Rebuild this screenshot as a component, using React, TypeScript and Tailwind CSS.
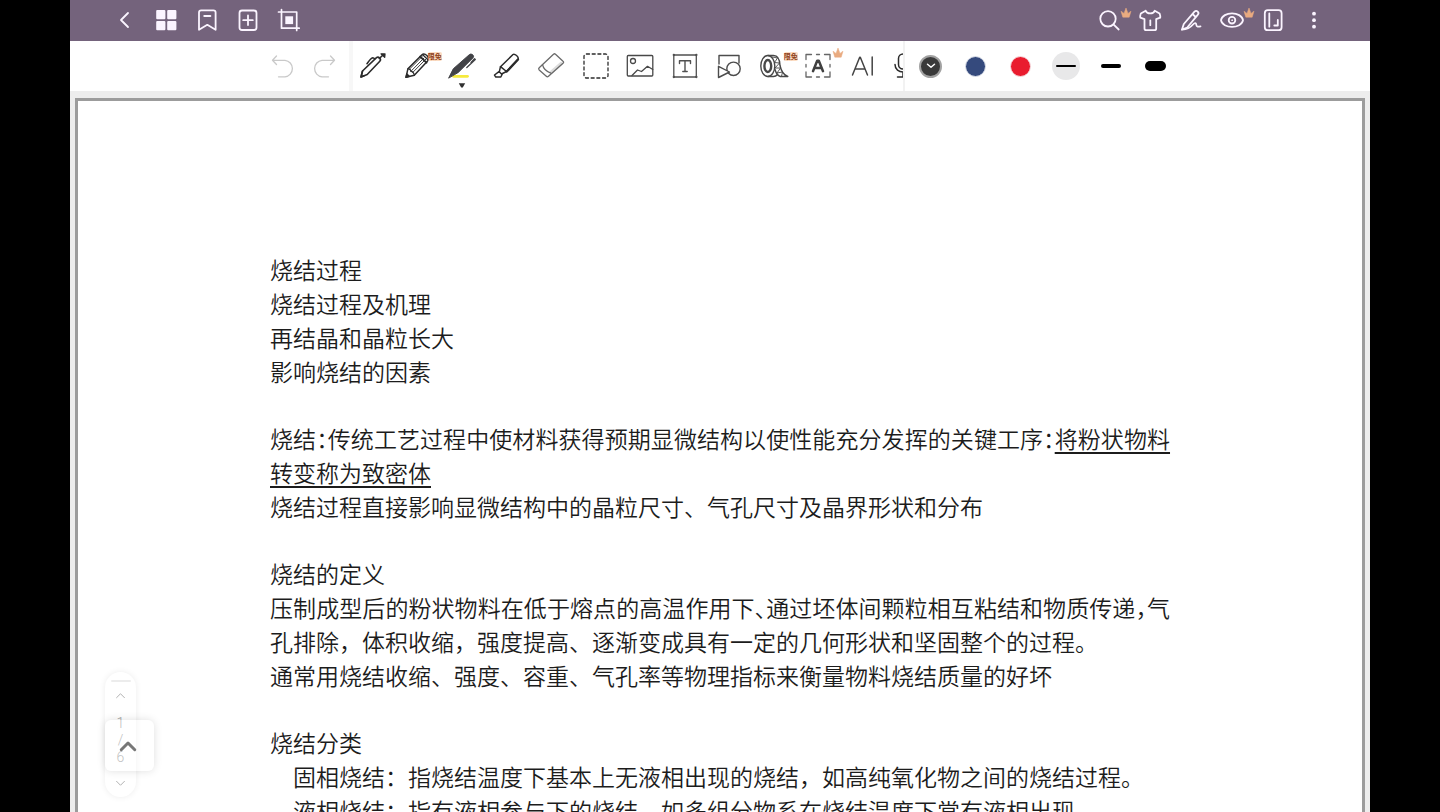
import type { ReactNode } from 'react';

const line = {
  fill: 'none',
  stroke: 'currentColor',
  strokeLinecap: 'round',
  strokeLinejoin: 'round',
} as const;

function Icon({ children, width = 1.5 }: { children: ReactNode; width?: number }) {
  return (
    <svg viewBox="0 0 30 30" className="size-[30px] shrink-0" {...line} strokeWidth={width} aria-hidden="true">
      {children}
    </svg>
  );
}

function Crown({ className }: { className: string }) {
  return (
    <svg viewBox="0 0 12 11" className={className} aria-hidden="true">
      <path
        d="M2.800 10.200 1 4.200l3 2.200L6 1l2 5.400 3-2.200-1.800 6z"
        fill="#e9ab80"
        stroke="#e9ab80"
        strokeWidth="0.5"
        strokeLinejoin="round"
      />
    </svg>
  );
}

function FreeBadge() {
  return (
    <span className="absolute top-px left-[32px] rounded-xs bg-[#fcdcc2] text-[7px] leading-[9px] font-bold whitespace-nowrap text-[#8f431c]">
      限免
    </span>
  );
}

type Item = { label: string; icon: ReactNode; extra?: ReactNode };

const headerLeft: Item[] = [
  { label: '返回', icon: <path d="M18 8 11 15l7 7" strokeWidth="1.800" /> },
  {
    label: '缩略图',
    icon: (
      <g fill="currentColor" stroke="none">
        <rect x="5.200" y="5" width="9.200" height="9.200" rx="1" />
        <rect x="16.200" y="5" width="9.200" height="9.200" rx="1" />
        <rect x="5.200" y="16" width="9.200" height="9.200" rx="1" />
        <rect x="16.200" y="16" width="9.200" height="9.200" rx="1" />
      </g>
    ),
  },
  {
    label: '书签',
    icon: (
      <>
        <path d="M7 7.500a2.200 2.200 0 0 1 2.200-2.200h12.200a2.200 2.200 0 0 1 2.200 2.200v17.300l-8.300-5-8.300 5z" />
        <path d="M12.200 11h6.200" />
      </>
    ),
  },
  {
    label: '添加页面',
    icon: (
      <>
        <rect x="6.500" y="5.500" width="17" height="19.500" rx="2.500" />
        <path d="M15 10.500v9.500M10.200 15.200h9.600" />
      </>
    ),
  },
  {
    label: '裁剪',
    icon: (
      <>
        <path d="M7.500 4.500v18.700h17.700M4.500 7h18.200v18.500" strokeWidth="1.700" />
        <rect x="11.300" y="11.300" width="7.800" height="7.800" fill="currentColor" stroke="none" />
      </>
    ),
  },
];

const headerRight: Item[] = [
  {
    label: '搜索',
    icon: (
      <>
        <circle cx="14" cy="13.800" r="7.700" />
        <path d="m19.700 19.700 5 4.800" />
      </>
    ),
    extra: <Crown className="absolute top-0.5 left-8 h-[11px] w-3" />,
  },
  {
    label: '主题',
    icon: (
      <>
        <path d="M10.700 5.700 5.800 8.500c-.7 2-.9 3-.5 4.200l4.200 1.500v9.300c0 1.200.6 1.700 1.700 1.700h8.300c1.200 0 1.700-.6 1.700-1.700v-9.300l4-1.500c.3-1.500 0-2.700-.6-4.200l-4.900-2.800c-1.200 3.700-7.800 3.700-9 0z" />
        <path d="M15.300 15.500v4.700" />
      </>
    ),
  },
  {
    label: '手写',
    icon: (
      <>
        <path d="M18.500 6.700a2.200 2.200 0 0 1 3.200 3.200L11.200 22.500 6 24.500l1.800-5.500z" />
        <path d="m17 9.500 2.200 2M6 24.700c4.500-.2 8.500-2.200 11-5.200 1.900-2 3.200-1.500 3.300.3.100 2.200 2 2.200 4.200 1.500" />
      </>
    ),
  },
  {
    label: '阅读模式',
    icon: (
      <>
        <path d="M4 15.200c1.500-9 20.500-9 22 0-1.500 9-20.500 9-22 0z" />
        <circle cx="15" cy="15.200" r="3.300" />
        <circle cx="15" cy="15.200" r=".4" strokeWidth="1" />
      </>
    ),
    extra: <Crown className="absolute top-0.5 left-8 h-[11px] w-3" />,
  },
  {
    label: '页面设置',
    icon: (
      <>
        <rect x="6.800" y="5.200" width="16.800" height="20" rx="3" />
        <path d="M11.300 8.500v13.200M19.800 15v5.500h-3.500" />
      </>
    ),
  },
  {
    label: '更多',
    icon: (
      <g fill="currentColor" stroke="none">
        <circle cx="15" cy="8.700" r="1.900" />
        <circle cx="15" cy="15.200" r="1.900" />
        <circle cx="15" cy="21.700" r="1.900" />
      </g>
    ),
  },
];

const tools: Item[] = [
  {
    label: '钢笔',
    icon: (
      <g strokeWidth="1.600">
        <path d="m3 26 1.500-6L18.500 6.700c2-1.700 5.300 1.300 3.300 3.500L9.200 23.500z" />
        <path d="M4.500 20.200 3 26l3-1.200M9 12.700c2-3 4.500-5.900 5.700-6 1 0 1.500.4 2 1.200M21.300 7.500l3.200-3" />
        <path d="m23 2.800 3.700 3.500.3-3.300z" fill="currentColor" strokeWidth="1.300" />
      </g>
    ),
  },
  {
    label: '铅笔',
    icon: (
      <g strokeWidth="1.500">
        <path d="m3 26.300 1.900-8.500L18.700 4c3-3 8.800 2.300 5.900 5.900L11.300 24.200z" />
        <path d="M4.900 17.800c1.700-.1 2.800.7 3 2.500 1.800.1 3 1.600 3.400 3.900" strokeWidth="1.200" />
        <path d="M7.900 20.300 20.800 7.200M6.400 18.200l13-13M9.900 21.300 22.800 8.200" strokeWidth=".9" />
        <path d="m17.200 5.600 6.300 6" strokeWidth="2" />
        <path d="m20 4 4.700 4.500" strokeWidth="1.200" />
        <path d="m3 26.300 .9-3.300 2.300 2.200z" fill="currentColor" />
      </g>
    ),
    extra: <FreeBadge />,
  },
  {
    label: '荧光书写笔',
    icon: (
      <>
        <path d="M6.500 25.300h14" stroke="#f6ea3e" strokeWidth="2.800" />
        <path
          d="M1.800 26.800 6.300 17.800 22.500 3.500c1.800-1.300 5 .8 3.800 3L11.500 21.200z"
          fill="#424347"
          stroke="#424347"
          strokeWidth="1"
        />
        <path d="m24 11.500 3.500-3.800.8.8-8.500 8" stroke="#424347" strokeWidth="1.300" />
      </>
    ),
    extra: (
      <svg viewBox="0 0 8 5" className="absolute top-8 left-[18px] h-[5px] w-2" aria-hidden="true">
        <path d="M.8.3h6.400L4.800 4.500H3.200z" fill="#303030" />
      </svg>
    ),
  },
  {
    label: '记号笔',
    icon: (
      <g strokeWidth="1.500">
        <path d="M8.500 15.700 21 3.500c1.500-1.300 6.300 2.500 5 4.700L14.500 20.500z" />
        <path d="m8.500 15.700-1.200 5.100 2.200 2.200 5-2.500M7.300 20.300 2.500 24l1.300 2h5l1.500-3" />
        <path d="M14.800 20.500 26 8.500" strokeWidth="2.300" />
      </g>
    ),
  },
  {
    label: '橡皮擦',
    icon: (
      <g stroke="#6a6a6a" strokeWidth="1.300">
        <path d="m15.500 21 9.500-8.300" stroke="#dcdcdc" strokeWidth="3.500" />
        <path d="M17.500 3.200c.7-.7 1.300-.7 2 0l7.500 7c.8.700.8 1.300 0 2L12.500 25.300c-.8.700-1.500.7-2.200 0L3.200 19c-.7-.7-.7-1.500 0-2.200z" />
        <path d="M6.500 13.700c.8 3.800 3.800 6.800 8.300 8.500" />
      </g>
    ),
  },
  {
    label: '套索选择',
    icon: <rect x="3" y="3" width="24" height="24" rx="2.500" strokeDasharray="3 2.700" strokeWidth="1.300" />,
  },
  {
    label: '图片',
    icon: (
      <g strokeWidth="1.300" stroke="#484848">
        <rect x="2.300" y="4.500" width="25.500" height="20.500" rx="1" />
        <circle cx="8" cy="10" r="2.500" />
        <path d="m7 24.500 5.500-5.500 4 1.500 6-5.200 5.300 3.200" />
      </g>
    ),
  },
  {
    label: '文本框',
    icon: (
      <g stroke="#505050">
        <rect x="3.800" y="4" width="22.500" height="22" strokeWidth="1.300" />
        <path d="M9.500 12.500V9.800h11v2.700M15 9.800v10.700M12.800 20.500h4.400" strokeWidth="1.400" />
        <path d="M3.800 4h.1M26.300 4h.1M3.800 26h.1M26.300 26h.1" strokeWidth="2.300" />
      </g>
    ),
  },
  {
    label: '形状',
    icon: (
      <g strokeWidth="1.400" stroke="#4c4c4c">
        <path d="M5 13V4.500h20V12" />
        <circle cx="19.500" cy="17.800" r="6.700" />
        <path d="m4.500 15.300 11 5.700-11 5.500z" fill="#fff" />
      </g>
    ),
  },
  {
    label: '胶带',
    icon: (
      <g stroke="#484848">
        <ellipse cx="8.800" cy="15" rx="7" ry="10.500" strokeWidth="1.400" />
        <ellipse cx="8.800" cy="15" rx="3.400" ry="6" strokeWidth="2.400" />
        <path
          d="M9 4.500h5.500c4.500 0 6.300 4.700 6.500 10 1.300 6 3.500 9.500 7.800 11h-7.500C18.300 24.500 17 22 16 18.500M9 25.500h5.500c2 0 3-.8 4-2"
          strokeWidth="1.400"
        />
        <path d="m13.500 6 5 1-3 4.500 5 .5-4.500 5 5.500 0-3.500 5 5.500-1-1 4.300" strokeWidth=".9" />
      </g>
    ),
    extra: <FreeBadge />,
  },
  {
    label: '文字识别',
    icon: (
      <>
        <path
          d="M3 8.500V3.500h5.500M21.500 3.500H27v5M27 21v5h-5.500M8.500 26H3v-5M13.500 3.500h3M13.500 26h3M3 13.500v2.500M27 13.500v2.500"
          strokeWidth="1.300"
          stroke="#666"
        />
        <path d="m10 20.200 4.200-10.400h1.600L20 20.200M11.800 17h6.400" strokeWidth="2.500" stroke="#404040" />
      </>
    ),
    extra: <Crown className="absolute top-[-4px] left-9 h-[11px] w-3" />,
  },
  {
    label: '智能助手',
    icon: <path d="m4.500 24 7.200-17.800h.6L19.500 24M7 18h10M24.200 6v18" strokeWidth="1.500" stroke="#444" />,
  },
];

function HeaderButton({ item }: { item: Item }) {
  return (
    <button type="button" aria-label={item.label} className="flex h-full w-[41px] items-center justify-center">
      <span className="relative flex w-full justify-center">
        <Icon width={1.800}>{item.icon}</Icon>
        {item.extra}
      </span>
    </button>
  );
}

function Header() {
  return (
    <header className="flex h-[41px] shrink-0 justify-between bg-[#74637c] pr-[36px] pb-px pl-[34px] text-[#fbf4ff]">
      <nav className="flex" aria-label="文档">
        {headerLeft.map((item) => (
          <HeaderButton key={item.label} item={item} />
        ))}
      </nav>
      <div className="flex">
        {headerRight.map((item) => (
          <HeaderButton key={item.label} item={item} />
        ))}
      </div>
    </header>
  );
}

const swatch = 'flex w-[45px] items-center justify-center';

function Toolbar() {
  return (
    <div className="flex h-[50px] shrink-0 bg-white" role="toolbar" aria-label="绘图工具">
      <div className="flex w-[279px] shrink-0 justify-end pr-[5px] text-[#c9c9c9]">
        <button type="button" aria-label="撤销" className="flex w-[41px] items-center justify-center">
          <Icon width={1.300}>
            <path d="m8.500 5-4 4.300 4 4.200M4.800 9.300H17a8.300 8.300 0 0 1 0 16.500h-6.500" />
          </Icon>
        </button>
        <button type="button" aria-label="重做" className="flex w-[41px] items-center justify-center">
          <Icon width={1.300}>
            <path d="m21.500 5 4 4.300-4 4.200M25.200 9.300H13a8.300 8.300 0 0 0 0 16.500h6.500" />
          </Icon>
        </button>
      </div>
      <div className="flex min-w-0 flex-1 border-l-4 border-[#f7f7f7] text-[#2b2b2b]">
        <div className="-ml-0.5 grid min-w-0 flex-1 grid-cols-12">
          {tools.map((tool) => (
            <button key={tool.label} type="button" aria-label={tool.label} className="flex items-center justify-center">
              <span className="relative flex w-11 justify-center">
                <Icon>{tool.icon}</Icon>
                {tool.extra}
              </span>
            </button>
          ))}
        </div>
        <button type="button" aria-label="录音" className="flex w-[18px] items-center overflow-hidden pl-1">
          <Icon width={1.500}>
            <rect x="9.500" y="3" width="9" height="15" rx="4.500" />
            <path d="M6 13.500c0 10 16 10 16 0M14 21v5M8.500 26h11" />
          </Icon>
        </button>
      </div>
      <div className="flex w-[467px] shrink-0 border-l-2 border-[#f2f2f2] pl-[3px]">
        <button type="button" aria-label="深灰色" className={swatch}>
          <span className="flex size-[23px] items-center justify-center rounded-full border-2 border-[#a2a2a2] bg-[#3a3a3a]">
            <svg viewBox="0 0 10 6" className="h-1.5 w-2.5" {...line} stroke="#fff" strokeWidth="1.500" aria-hidden="true">
              <path d="m1.500 1.200 3.500 3 3.500-3" />
            </svg>
          </span>
        </button>
        <button type="button" aria-label="蓝色" className={swatch}>
          <span className="size-[21px] rounded-full border border-[#dfe3ec] bg-[#354a7d]" />
        </button>
        <button type="button" aria-label="红色" className={swatch}>
          <span className="size-[21px] rounded-full border border-[#f6dfe2] bg-[#e91c2e]" />
        </button>
        <button type="button" aria-label="细线" className={swatch}>
          <span className="flex size-7 items-center justify-center rounded-full bg-[#e8e8e9]">
            <span className="h-0.5 w-5 rounded-full bg-black" />
          </span>
        </button>
        <button type="button" aria-label="中线" className={swatch}>
          <span className="h-1 w-5 rounded-full bg-black" />
        </button>
        <button type="button" aria-label="粗线" className={swatch}>
          <span className="h-2.5 w-[21px] rounded-full bg-black" />
        </button>
      </div>
    </div>
  );
}

function FullLine({ children }: { children: ReactNode }) {
  return <span className="block [font-feature-settings:'halt'] [text-align-last:justify]">{children}</span>;
}

function Notes() {
  return (
    <article className="flex flex-col gap-[33px] px-[192px] pt-[151px] font-['Noto_Sans_CJK_SC',sans-serif] text-[23px] leading-[34px] font-[350] whitespace-nowrap text-[#1c1c1c]">
      <section>
        <p>烧结过程</p>
        <p>烧结过程及机理</p>
        <p>再结晶和晶粒长大</p>
        <p>影响烧结的因素</p>
      </section>
      <section>
        <p>
          <FullLine>
            烧结：传统工艺过程中使材料获得预期显微结构以使性能充分发挥的关键工序：
            <u className="decoration-2 underline-offset-4">将粉状物料</u>
          </FullLine>
          <u className="decoration-2 underline-offset-4">转变称为致密体</u>
        </p>
        <p>烧结过程直接影响显微结构中的晶粒尺寸、气孔尺寸及晶界形状和分布</p>
      </section>
      <section>
        <p>烧结的定义</p>
        <p>
          <FullLine>压制成型后的粉状物料在低于熔点的高温作用下、通过坯体间颗粒相互粘结和物质传递，气</FullLine>
          孔排除，体积收缩，强度提高、逐渐变成具有一定的几何形状和坚固整个的过程。
        </p>
        <p>通常用烧结收缩、强度、容重、气孔率等物理指标来衡量物料烧结质量的好坏</p>
      </section>
      <section>
        <p>烧结分类</p>
        <p className="pl-[23px]">固相烧结：指烧结温度下基本上无液相出现的烧结，如高纯氧化物之间的烧结过程。</p>
        <p className="pl-[23px]">液相烧结：指有液相参与下的烧结，如多组分物系在烧结温度下常有液相出现</p>
      </section>
    </article>
  );
}

function Chevron({ up = false, className }: { up?: boolean; className: string }) {
  return (
    <svg viewBox="0 0 12 8" className={className} {...line} aria-hidden="true">
      <path d={up ? 'm1.500 6.500 4.500-4.500 4.500 4.500' : 'm1.500 1.500 4.500 4.500 4.500-4.500'} />
    </svg>
  );
}

function PageNavigator() {
  return (
    <div className="absolute bottom-[15px] left-[35px]">
      <div className="flex h-[125px] w-[31px] flex-col items-center rounded-full bg-white font-['Roboto',sans-serif] text-sm leading-[17px] text-[#a6a6a6] shadow-[0_0_6px_rgba(0,0,0,0.08)]">
        <span className="mt-2 h-0.5 w-5 rounded-full bg-[#ececec]" />
        <button type="button" aria-label="上一页" className="mt-2.5">
          <Chevron up className="h-[7px] w-[11px]" />
        </button>
        <span className="mt-4 flex flex-col items-center font-light">
          <span>1</span>
          <span>/</span>
          <span>6</span>
        </span>
        <button type="button" aria-label="下一页" className="mt-3.5">
          <Chevron className="h-[7px] w-[11px]" />
        </button>
      </div>
      <button
        type="button"
        aria-label="展开"
        className="absolute top-12 left-0 flex h-[51px] w-[49px] items-center justify-center rounded-md bg-white/30 pr-[3px] text-[#777] shadow-[0_0_8px_rgba(0,0,0,0.13)]"
      >
        <Chevron up className="h-3 w-[18px] stroke-2" />
      </button>
    </div>
  );
}

export default function App() {
  return (
    <div className="h-screen bg-black px-[70px] font-['Noto_Sans_CJK_SC',sans-serif]">
      <div className="relative flex h-full flex-col overflow-hidden bg-[#ededed]">
        <Header />
        <Toolbar />
        <main className="mx-[5px] mt-[7px] min-h-0 flex-1 overflow-hidden border-x-[3px] border-t-[3px] border-[#9c9c9c] bg-white">
          <Notes />
        </main>
        <PageNavigator />
      </div>
    </div>
  );
}
